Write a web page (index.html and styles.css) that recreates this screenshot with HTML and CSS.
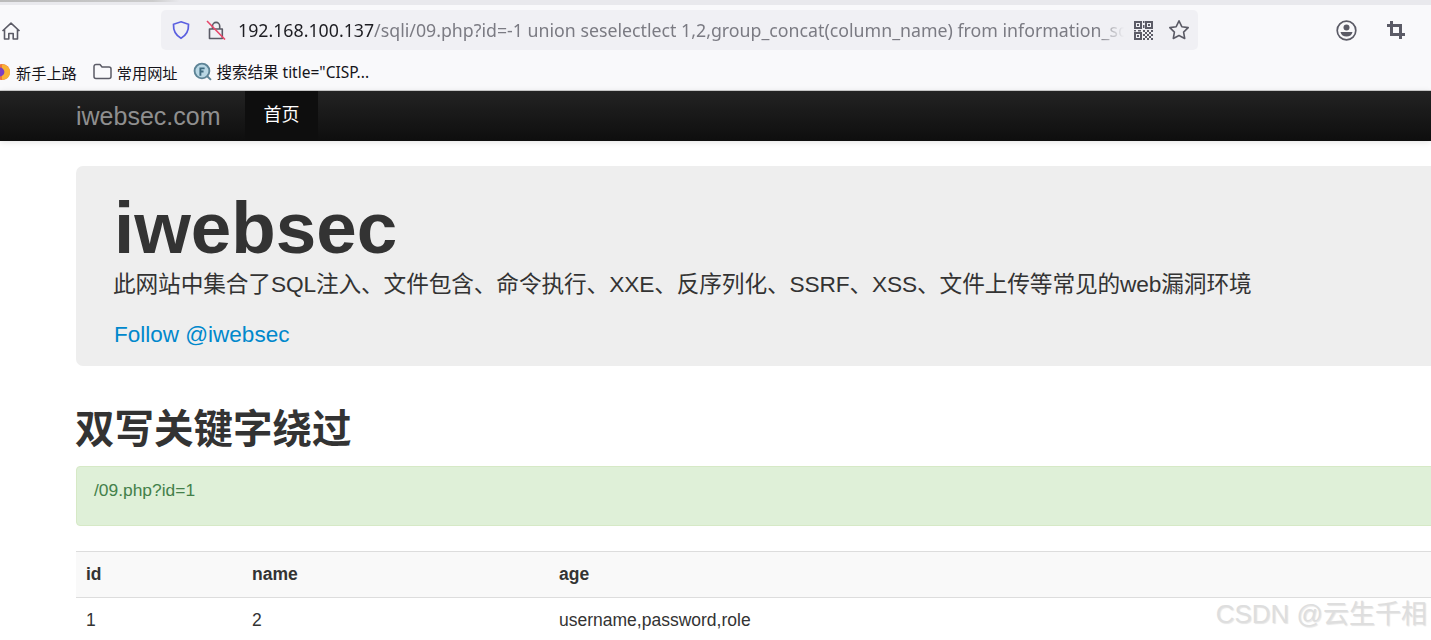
FILE: index.html
```html
<!DOCTYPE html>
<html lang="zh-CN">
<head>
<meta charset="utf-8">
<title>iwebsec</title>
<link rel="stylesheet" href="styles.css">
</head>
<body>
<header class="chrome">
  <div class="tabstrip"><div class="tabshadow"></div></div>
  <div class="toolbar">
    <svg class="home" width="20" height="20" viewBox="0 0 20 20" fill="none" stroke="#5b5b66" stroke-width="1.6" stroke-linejoin="round"><path d="M1.5 10 10 2.2 18.500 10M3.500 8.500V18h4.300v-5.500h4.400V18h4.300V8.500"/></svg>
    <div class="urlbar">
      <svg class="shield" width="20" height="20" viewBox="0 0 20 20" fill="none" stroke="#5a5fe0" stroke-width="1.700"><path d="M10 1.800 17.500 4.300c.3 6.500-2 11-7.500 13.900C4.500 15.300 2.200 10.800 2.500 4.300z"/></svg>
      <svg class="lock" width="20" height="20" viewBox="0 0 20 20" fill="none"><path d="M6.500 9V6a3.600 3.600 0 0 1 7.200 0v3M3.500 9h12.800v9.500H3.500z" stroke="#5b5b66" stroke-width="1.600" stroke-linejoin="round"/><path d="M1 1 19 19.500" stroke="#e8476a" stroke-width="1.600"/></svg>
      <div class="url"><span class="host">192.168.100.137</span>/sqli/09.php?id=-1 union seselectlect 1,2,group_concat(column_name) from information_sc</div>
      <svg class="qr" width="19" height="19" viewBox="0 0 19 19" fill="#5b5b66"><path fill-rule="evenodd" d="M0 0h8v8H0zM2 2v4h4V2zM11 0h8v8h-8zM13 2v4h4V2zM0 11h8v8H0zM2 13v4h4v-4z"/><path d="M3 3h2v2H3zM14 3h2v2h-2zM3 14h2v2H3zM9 0h1.500v2H9zM9 4h1.500v3H9zM0 9h2v1.500H0zM4 9h3v1.500H4zM9 9h2v2H9zM13 9h2v2h-2zM17 9h2v2h-2zM11 11h2v2h-2zM15 11h2v2h-2zM9 13h2v2H9zM13 13h2v2h-2zM17 13h2v2h-2zM11 15h2v2h-2zM15 15h2v2h-2zM9 17h2v2H9zM13 17h2v2h-2zM17 17h2v2h-2z"/></svg>
      <svg class="star" width="22" height="22" viewBox="0 0 22 22" fill="none" stroke="#5b5b66" stroke-width="1.600" stroke-linejoin="round"><path d="M11 1.800l2.800 5.900 6.400.9-4.600 4.500 1.100 6.400-5.700-3-5.700 3 1.100-6.400L1.800 8.600l6.400-.9z"/></svg>
    </div>
    <svg class="account" width="21" height="21" viewBox="0 0 21 21" fill="none"><circle cx="10.500" cy="10.500" r="9.300" stroke="#5b5b66" stroke-width="1.700"/><circle cx="10.500" cy="7.500" r="3" fill="#5b5b66"/><path d="M4.500 12h12c-.5 3-3 4.500-6 4.500s-5.500-1.500-6-4.500z" fill="#5b5b66"/></svg>
    <svg class="crop" width="18" height="18" viewBox="0 0 18 18" fill="none" stroke="#5b5b66" stroke-width="3"><path d="M4.500 0v13.500H18M0 4.500h13.500V18"/></svg>
  </div>
  <nav class="bookmarks">
    <a class="mark mark-first"><svg class="fox" width="14" height="18" viewBox="0 0 14 18"><circle cx="5" cy="9" r="8" fill="#f0763a"/><path d="M5 1.500a7.500 7.500 0 0 1 8 7.500c0 3-1 5-3 6.500L5 17z" fill="#f9b233"/><circle cx="3" cy="9" r="4.400" fill="#7a3fc4"/></svg><span>新手上路</span></a>
    <a class="mark"><svg width="19" height="17" viewBox="0 0 19 17" fill="none" stroke="#5b5b66" stroke-width="1.500" stroke-linejoin="round"><path d="M1 3.500A2 2 0 0 1 3 1.500h4l2 2.500h7a2 2 0 0 1 2 2v7.500a2 2 0 0 1-2 2H3a2 2 0 0 1-2-2z"/></svg><span>常用网址</span></a>
    <a class="mark"><svg width="19" height="19" viewBox="0 0 18 18"><circle cx="8.500" cy="8.500" r="7" fill="#b9d7e4" stroke="#5e8496" stroke-width="1.800"/><path d="M7 13V6h4M7 9h3" fill="none" stroke="#3f6b80" stroke-width="1.800"/><path d="M13.500 13.500 17 17" stroke="#5e8496" stroke-width="1.800"/></svg><span class="mark-long">搜索结果 title="CISP...</span></a>
  </nav>
</header>

<div class="navbar">
  <a class="brand">iwebsec.com</a>
  <a class="nav-active">首页</a>
</div>

<main class="container">
  <section class="jumbotron">
    <h1>iwebsec</h1>
    <p class="lead">此网站中集合了SQL注入、文件包含、命令执行、XXE、反序列化、SSRF、XSS、文件上传等常见的web漏洞环境</p>
    <p class="follow"><a>Follow @iwebsec</a></p>
  </section>
  <h2>双写关键字绕过</h2>
  <div class="alert">/09.php?id=1</div>
  <table>
    <thead><tr><th class="col-id">id</th><th class="col-name">name</th><th>age</th></tr></thead>
    <tbody><tr><td>1</td><td>2</td><td>username,password,role</td></tr></tbody>
  </table>
</main>
<div class="watermark">CSDN @云生千相</div>
</body>
</html>
```
FILE: styles.css
```css
* { box-sizing: border-box; }
html, body { margin: 0; height: 640px; overflow: hidden; background: #fff; }
body { position: relative; width: 1431px; font-family: "Liberation Sans", "Noto Sans CJK SC", sans-serif; color: #333; }

.chrome { height: 91px; background: #f9f9fb; border-bottom: 1px solid #ccc; font-family: "Noto Sans", "Noto Sans CJK SC", sans-serif; }
.tabstrip { height: 5px; background: #e9e9ed; overflow: hidden; }
.tabshadow { width: 180px; height: 2px; background: linear-gradient(90deg, #bbb, #ccc 85%, #e9e9ed); }

.toolbar { display: flex; align-items: center; height: 50px; padding: 0 0 0 1px; }
.home { flex: none; margin-top: 1px; }
.urlbar { flex: none; display: flex; align-items: center; width: 1037px; height: 40px; margin-left: 140px; padding: 0 8px 0 10px; background: #f0f0f4; border-radius: 5px; }
.shield { flex: none; }
.lock { flex: none; margin-left: 15px; }
.url { flex: 1; min-width: 0; margin-left: 12px; white-space: nowrap; font-size: 17.750px; color: #7b7b83; -webkit-mask-image: linear-gradient(90deg, #000 97%, transparent); mask-image: linear-gradient(90deg, #000 97%, transparent); }
.host { color: #1d1d22; }
.qr { flex: none; margin-left: 10px; }
.star { flex: none; margin-left: 15px; }
.account { flex: none; margin-left: 138px; }
.crop { flex: none; margin-left: 30px; }

.bookmarks { display: flex; align-items: center; height: 35px; padding-bottom: 2px; font-size: 15.200px; color: #15141a; }
.mark { display: flex; align-items: center; gap: 5px; margin-right: 15px; white-space: nowrap; }
.mark-first { margin-left: -3px; margin-right: 16px; }
.mark-long { font-size: 15.500px; }

.navbar { display: flex; align-items: stretch; height: 50px; padding-left: 76px; background: linear-gradient(#232323, #0e0e0e); box-shadow: 0 1px 6px rgba(0,0,0,.12); }
.brand { width: 169px; line-height: 50px; font-size: 25px; color: #8f8f8f; }
.nav-active { width: 73px; line-height: 49px; text-align: center; font-size: 18px; color: #fff; background: #0e0e0e; }

.container { width: 1560px; padding: 25px 0 0 76px; }
.jumbotron { height: 200px; padding: 22px 38px 0; background: #eee; border-radius: 7px; }
h1 { margin: 0; font-size: 72.800px; line-height: 80px; font-weight: 700; color: #333; }
.lead { margin: 0; font-size: 22.700px; line-height: 32px; font-weight: 400; color: #333; white-space: nowrap; letter-spacing: -.13px; text-indent: -1px; }
.follow { margin: 19px 0 0; font-size: 22.500px; line-height: 32px; }
.follow a { color: #0088cc; }

h2 { margin: 39px 0 0; height: 50px; font-size: 39.500px; line-height: 49px; font-weight: 700; color: #333; text-indent: -1px; }
.alert { height: 60px; margin-top: 11px; padding: 12px 17px; font-size: 17.400px; line-height: 23px; color: #43804a; background: #dff0d8; border: 1px solid #d6e9c6; border-radius: 4px; }

table { width: 100%; margin-top: 25px; border-collapse: collapse; font-size: 17.500px; color: #333; }
th, td { padding: 0 10px; text-align: left; }
th { height: 46px; font-weight: 700; background: #f9f9f9; border-top: 1px solid #ddd; border-bottom: 1px solid #ddd; }
td { height: 45px; }
.col-id { width: 166px; }
.col-name { width: 307px; }

.watermark { position: absolute; right: 4px; bottom: 11px; font-family: "Liberation Sans", "Noto Sans CJK SC", sans-serif; font-size: 26px; line-height: 30px; font-weight: 400; color: #dedede; text-shadow: 1px 1px 1px rgba(0,0,0,.1); }
```
